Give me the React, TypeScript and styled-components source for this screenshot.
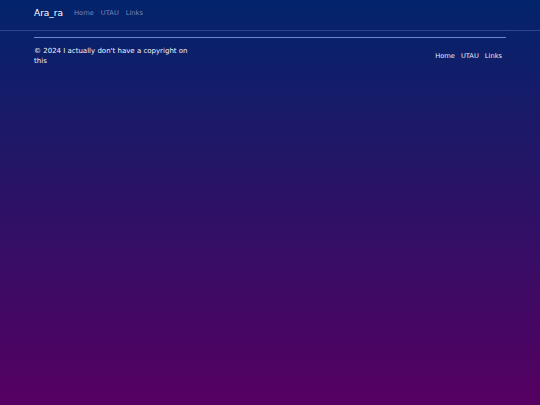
import { createGlobalStyle } from 'styled-components';
import styled from 'styled-components';

const GlobalStyle = createGlobalStyle`
  html, body {
    margin: 0;
    padding: 0;
  }
  body {
    min-height: 100vh;
    font-family: "DejaVu Sans", Verdana, sans-serif;
    color: #ffffff;
    background: linear-gradient(to bottom, #02246b 0%, #560062 100%);
    background-attachment: fixed;
  }
`;

const Page = styled.div`
  min-height: 100vh;
  display: flex;
  flex-direction: column;
`;

const HeaderBar = styled.header`
  height: 31px;
  box-sizing: border-box;
  border-block-end: 1px solid rgba(120, 140, 210, 0.35);
  padding-inline: 34px;
  display: flex;
  align-items: center;
  gap: 11px;
  padding-block-end: 4px;
`;

const Brand = styled.a`
  font-size: 9px;
  color: #ffffff;
  text-decoration: none;
`;

const NavList = styled.ul<{ dim?: boolean }>`
  display: flex;
  flex-direction: row;
  align-items: center;
  gap: ${({ dim }) => (dim ? '7px' : '6px')};
  list-style: none;
  margin: 0;
  padding: 0;
  padding-inline-end: ${({ dim }) => (dim ? '0' : '4px')};
  font-size: ${({ dim }) => (dim ? '6.7px' : '6.7px')};

  a {
    color: ${({ dim }) => (dim ? 'rgba(160, 175, 220, 0.75)' : '#e8ecf8')};
    text-decoration: none;
  }
`;

const Footer = styled.footer`
  margin-inline: 34px;
  margin-block-start: 6px;
  border-block-start: 1px solid #7186cc;
  padding-block-start: 8px;
  display: flex;
  align-items: center;
  justify-content: space-between;
`;

const Copyright = styled.p`
  margin: 0;
  max-width: 162px;
  font-size: 7px;
  line-height: 10px;
  color: #f2f4fa;
`;

const links = ['Home', 'UTAU', 'Links'];

export default function App() {
  return (
    <Page>
      <GlobalStyle />
      <HeaderBar>
        <Brand href="#">Ara_ra</Brand>
        <NavList dim>
          {links.map((l) => (
            <li key={l}>
              <a href="#">{l}</a>
            </li>
          ))}
        </NavList>
      </HeaderBar>
      <Footer>
        <Copyright>© 2024 I actually don't have a copyright on this</Copyright>
        <NavList>
          {links.map((l) => (
            <li key={l}>
              <a href="#">{l}</a>
            </li>
          ))}
        </NavList>
      </Footer>
    </Page>
  );
}
